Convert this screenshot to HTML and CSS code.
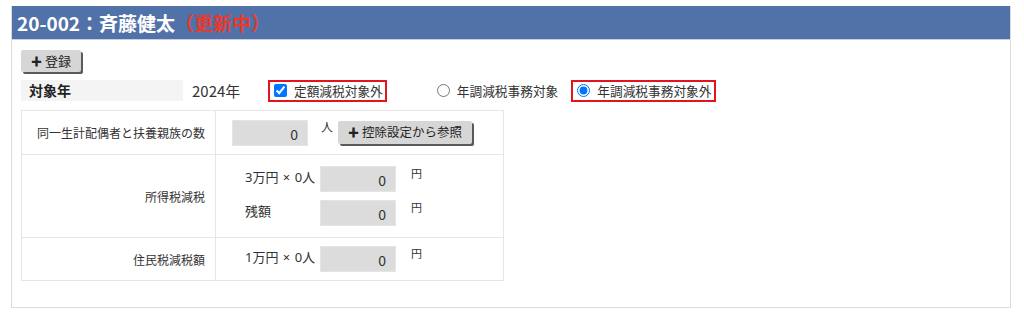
FILE: index.html
```html
<!DOCTYPE html>
<html>

<head>
    <title>斉藤健太</title>
    <meta charset="utf-8">
    <link rel="stylesheet" href="styles.css">
</head>

<body>
    <div class="panel">
        <header class="panel-head">
            <h1>20-002：斉藤健太<span class="status">（更新中）</span></h1>
        </header>

        <div class="panel-body">
            <button class="btn save"><span class="plus">✚</span>登録</button>

            <div class="year-row">
                <div class="year-label">対象年</div>
                <div class="year-value">2024年</div>
                <label class="opt mark"><input type="checkbox" checked>定額減税対象外</label>
                <label class="opt plain"><input type="radio" name="nencho">年調減税事務対象</label>
                <label class="opt mark"><input type="radio" name="nencho" checked>年調減税事務対象外</label>
            </div>

            <table class="tax">
                <tr class="r1">
                    <th>同一生計配偶者と扶養親族の数</th>
                    <td>
                        <div class="line">
                            <div class="num">0</div>
                            <span class="unit">人</span>
                            <button class="btn ref"><span class="plus">✚</span>控除設定から参照</button>
                        </div>
                    </td>
                </tr>
                <tr class="r2">
                    <th>所得税減税</th>
                    <td>
                        <div class="line">
                            <span class="calc">3万円 × 0人</span>
                            <div class="num">0</div>
                            <span class="unit">円</span>
                        </div>
                        <div class="line">
                            <span class="calc">残額</span>
                            <div class="num">0</div>
                            <span class="unit">円</span>
                        </div>
                    </td>
                </tr>
                <tr class="r3">
                    <th>住民税減税額</th>
                    <td>
                        <div class="line">
                            <span class="calc">1万円 × 0人</span>
                            <div class="num">0</div>
                            <span class="unit">円</span>
                        </div>
                    </td>
                </tr>
            </table>
        </div>
    </div>
</body>

</html>
```

FILE: styles.css
```css
body {
    margin: 0;
    font-family: "Noto Sans CJK JP", "Noto Sans", sans-serif;
    color: #333;
    background: #fff;
}

.panel {
    box-sizing: border-box;
    width: 1000px;
    height: 302px;
    margin: 6px 0 0 11px;
    border: 1px solid #dcdcdc;
    border-top: none;
}

.panel-head {
    background-color: #5172a8;
    height: 34px;
    border-bottom: 1px solid #c8d0de;
    box-sizing: border-box;
    padding-left: 5px;
}

.panel-head h1 {
    margin: 0;
    font-size: 19px;
    line-height: 33px;
    color: #fff;
    font-weight: bold;
}

.status {
    color: #e8392b;
}

.panel-body {
    padding: 10px 9px;
}

.btn {
    display: block;
    white-space: nowrap;
    font-family: inherit;
    font-size: 13px;
    color: #222;
    background: #d6d6d6;
    border: none;
    border-radius: 2px;
    box-shadow: 2px 2px 0 #5a5a5a;
    height: 22px;
    line-height: 22px;
    padding: 0 10px;
}

.plus {
    font-size: 11px;
    margin-right: 3px;
}

.year-row {
    display: flex;
    align-items: center;
    margin-top: 8px;
    height: 21px;
}

.year-label {
    width: 154px;
    height: 21px;
    line-height: 21px;
    padding-left: 8px;
    background: #f4f4f4;
    font-weight: bold;
    font-size: 14px;
    color: #222;
}

.year-value {
    margin-left: 9px;
    width: 76px;
    font-size: 15px;
}

.opt {
    display: flex;
    align-items: center;
    font-size: 12.7px;
    height: 22px;
    box-sizing: border-box;
    padding: 0 2px 0 3px;
}

.opt input {
    margin: 0 7px 0 1px;
    width: 13px;
    height: 13px;
}

.mark {
    border: 2px solid #e3141c;
}

.plain {
    margin: 0 11px 0 46px;
}

.tax {
    margin-top: 9px;
    border-collapse: collapse;
    width: 483px;
    font-size: 12px;
}

.tax th,
.tax td {
    border: 1px solid #e6e6e6;
}

.tax th {
    width: 183px;
    text-align: right;
    font-weight: normal;
    padding: 0 10px 0 0;
}

.tax td {
    padding: 0 0 0 16px;
}

.r1 {
    height: 44px;
}

.r2 {
    height: 83px;
}

.r3 {
    height: 43px;
}

.line {
    display: flex;
    align-items: flex-start;
}

.r2 .line + .line {
    margin-top: 8px;
}

.calc {
    width: 75px;
    margin-left: 13px;
    padding-top: 1px;
    font-family: "Noto Sans", "Noto Sans CJK JP", sans-serif;
    font-size: 13px;
    word-spacing: 1px;
}

.num {
    box-sizing: border-box;
    width: 76px;
    height: 26px;
    background: #dcdcdc;
    border: 1px solid #e4e4e4;
    text-align: right;
    padding-right: 9px;
    font-size: 14px;
    line-height: 26px;
}

.unit {
    margin-left: 15px;
    font-size: 11px;
    line-height: 14px;
}

.r1 .unit {
    margin-left: 13px;
    font-size: 12px;
}

.btn.ref {
    margin-left: 5px;
    margin-top: 1px;
    font-size: 12.5px;
    height: 23px;
}
```
